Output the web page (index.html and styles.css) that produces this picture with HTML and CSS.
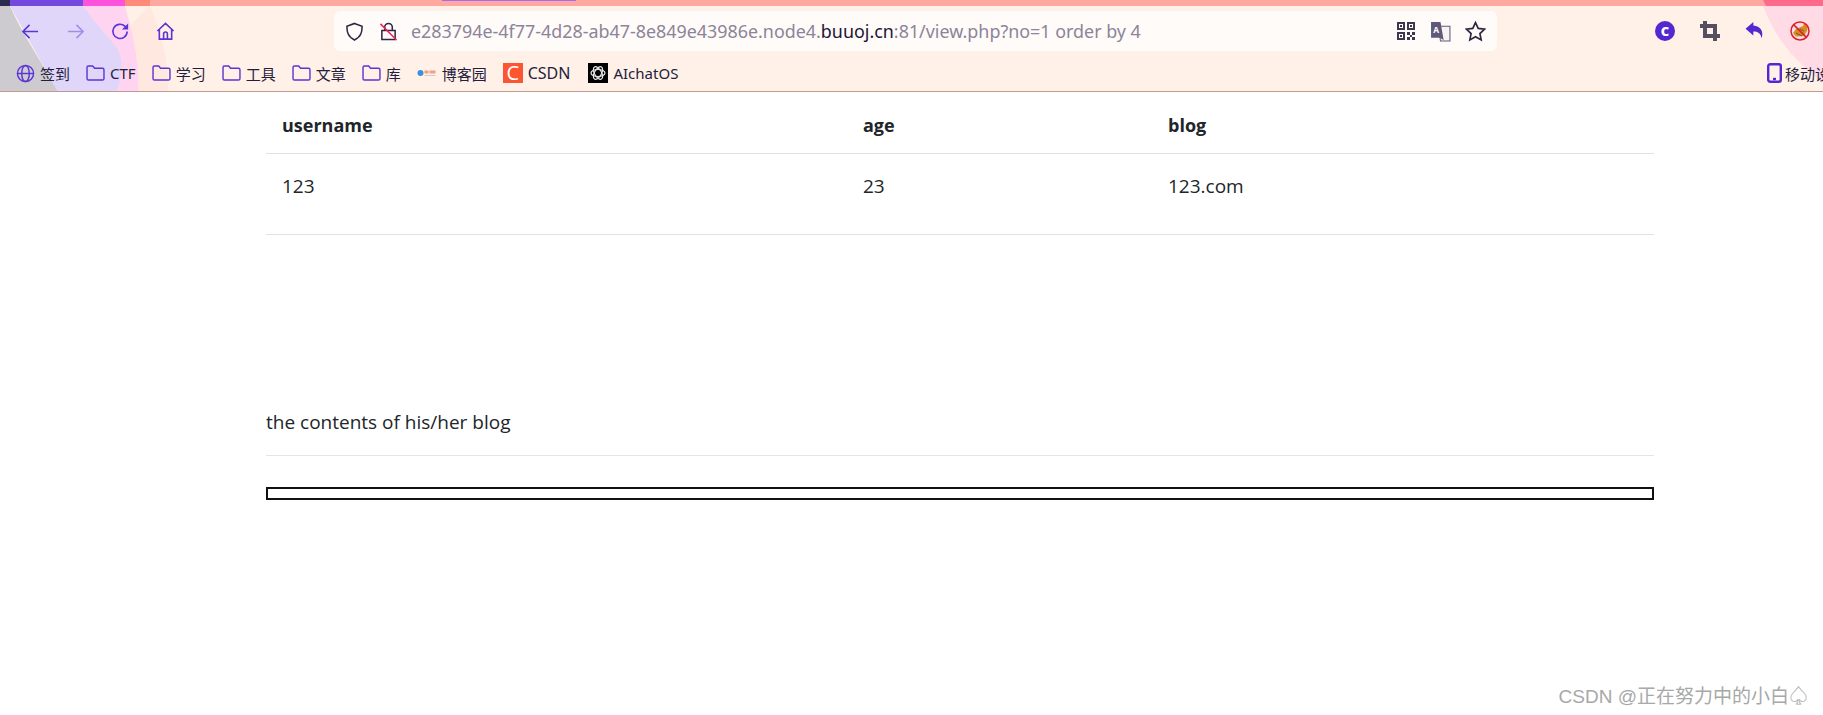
FILE: index.html
```html
<!DOCTYPE html>
<html lang="en">
<head>
<meta charset="utf-8">
<title>view.php</title>
<link rel="stylesheet" href="styles.css">
</head>
<body>
<header class="chrome">
  <svg class="chrome-bg" width="1823" height="92" viewBox="0 0 1823 92">
    <rect width="1823" height="92" fill="#fff1e7"/>
    <path d="M150 6C160 30 170 64 168 92H60Z" fill="#ffe8e0"/>
    <path d="M83 6H125C132 30 140 64 138 92H60Z" fill="#ffd4f0"/>
    <path d="M10 6H83C97 26 112 40 118 50C124 62 122 78 116 92H58Z" fill="#e0d6fa"/>
    <path d="M0 6H10C22 34 42 62 58 92H0Z" fill="#cdcbd0"/>
    <path d="M1763 6H1823V82C1795 62 1775 38 1763 6Z" fill="#ffdbe6"/>
    <rect width="1823" height="6" fill="#ffa8a0"/>
    <rect x="125" width="25" height="6" fill="#ff8a78"/>
    <rect x="83" width="42" height="6" fill="#ff52dc"/>
    <rect x="10" width="73" height="6" fill="#7348de"/>
    <rect width="10" height="6" fill="#2c2a50"/>
    <path d="M1763 0H1823V6H1766Z" fill="#ff6a8a"/>
    <rect x="442" width="134" height="1" fill="#a06cf5"/>
  </svg>

  <div class="toolbar">
    <svg class="nav-icon" viewBox="0 0 20 20"><path d="M18 10H2M9 3l-7 7 7 7"/></svg>
    <svg class="nav-icon nav-off" viewBox="0 0 20 20"><path d="M2 10h16M11 3l7 7-7 7"/></svg>
    <svg class="nav-icon" viewBox="0 0 20 20"><path d="M17 10a7.500 7.500 0 1 1-2.400-5.600L17 6.500"/><path class="solid" d="M18 1.500v6.500h-6.500z"/></svg>
    <svg class="nav-icon" viewBox="0 0 20 20"><path d="M1.500 9.500 10 1.500l8.500 8M3.500 8v10h13V8M8 18v-5.500a2 2 0 0 1 4 0V18"/></svg>

    <div class="address">
      <svg class="addr-icon" viewBox="0 0 20 20"><path d="M10 1.500 18 4.500c0 6-1 11-8 14.500C3 15.500 2 10.500 2 4.500z"/></svg>
      <svg class="addr-icon lock" viewBox="0 0 20 20"><path d="M3 9h14v9.500H3zM6 9V5.500a4 4 0 0 1 8 0V9"/><path class="slash" d="M1.500 2 18.500 19"/></svg>
      <span class="url">e283794e-4f77-4d28-ab47-8e849e43986e.node4.<b>buuoj.cn</b>:81/view.php?no=1 order by 4</span>
      <svg class="qr" viewBox="0 0 18 18"><path d="M0 0h8v8H0zM2 2v4h4V2zM10 0h8v8h-8zM12 2v4h4V2zM0 10h8v8H0zM2 12v4h4v-4zM3 3h2v2H3zM13 3h2v2h-2zM3 13h2v2H3zM10 10h3v3h-3zM15 10h3v3h-3zM13 13h2v2h-2zM10 15h3v3h-3zM15 15h3v3h-3z"/></svg>
      <svg class="translate" viewBox="0 0 20 20"><path class="tr-back" d="M8 5h11v14H10z"/><path class="tr-front" d="M1 1h9l3 17-4-2H1z"/><text x="3" y="11" class="tr-a">A</text></svg>
      <svg class="addr-icon star" viewBox="0 0 20 20"><path d="M10 1.500l2.600 5.600 6 .7-4.400 4.200 1.200 6L10 15l-5.400 3 1.200-6L1.400 7.800l6-.7z"/></svg>
    </div>

    <div class="extensions">
      <span class="ext-c">C</span>
      <svg class="ext" viewBox="0 0 18 18"><path class="crop" d="M4.500 0v13.500H18M0 4.500h13.500V18"/></svg>
      <svg class="ext" viewBox="0 0 18 18"><path class="solid-purple" d="M7.500 1 .5 7l7 6V9.500c4 0 6.500 1.500 7.500 6 2-6.500-1-11-7.500-11.500z"/></svg>
      <svg class="ext" viewBox="0 0 20 20"><path class="cat" d="M3 12l3-4 7-3 1-3 2 2 2 1-1 5-3 5-8 .5z"/><path class="cat-line" d="M6 12l6 3M10 8l4 2"/><circle class="ban" cx="10" cy="10" r="9"/><path class="ban" d="M3.600 3.600l12.800 12.800"/></svg>
    </div>
  </div>

  <nav class="bookmarks">
    <a class="bm"><svg class="bm-globe" viewBox="0 0 20 20"><circle cx="10" cy="10" r="8.500"/><ellipse cx="10" cy="10" rx="4" ry="8.500"/><path d="M1.500 10h17"/></svg>签到</a>
    <a class="bm"><svg class="folder" viewBox="0 0 20 17"><path d="M2.500 1H7l2 2.500h8.500a1.500 1.500 0 0 1 1.500 1.500v9.500a1.500 1.500 0 0 1-1.500 1.500h-15A1.500 1.500 0 0 1 1 14.500v-12A1.500 1.500 0 0 1 2.500 1z"/></svg>CTF</a>
    <a class="bm"><svg class="folder" viewBox="0 0 20 17"><path d="M2.500 1H7l2 2.500h8.500a1.500 1.500 0 0 1 1.500 1.500v9.500a1.500 1.500 0 0 1-1.500 1.500h-15A1.500 1.500 0 0 1 1 14.500v-12A1.500 1.500 0 0 1 2.500 1z"/></svg>学习</a>
    <a class="bm"><svg class="folder" viewBox="0 0 20 17"><path d="M2.500 1H7l2 2.500h8.500a1.500 1.500 0 0 1 1.500 1.500v9.500a1.500 1.500 0 0 1-1.500 1.500h-15A1.500 1.500 0 0 1 1 14.500v-12A1.500 1.500 0 0 1 2.500 1z"/></svg>工具</a>
    <a class="bm"><svg class="folder" viewBox="0 0 20 17"><path d="M2.500 1H7l2 2.500h8.500a1.500 1.500 0 0 1 1.500 1.500v9.500a1.500 1.500 0 0 1-1.500 1.500h-15A1.500 1.500 0 0 1 1 14.500v-12A1.500 1.500 0 0 1 2.500 1z"/></svg>文章</a>
    <a class="bm"><svg class="folder" viewBox="0 0 20 17"><path d="M2.500 1H7l2 2.500h8.500a1.500 1.500 0 0 1 1.500 1.500v9.500a1.500 1.500 0 0 1-1.500 1.500h-15A1.500 1.500 0 0 1 1 14.500v-12A1.500 1.500 0 0 1 2.500 1z"/></svg>库</a>
    <a class="bm"><svg class="cnb" viewBox="0 0 20 8"><circle cx="3.500" cy="4" r="3" fill="#3b8fe0"/><rect x="7.500" y="1.500" width="4" height="3" fill="#f0a070"/><rect x="12.500" y="1.500" width="6" height="3" fill="#f0a090"/><rect x="7.500" y="6" width="11" height="1" fill="#ccc"/></svg>博客园</a>
    <a class="bm bm-wide"><span class="csdn">C</span>CSDN</a>
    <a class="bm bm-ai"><svg class="aichat" viewBox="0 0 20 20"><rect width="20" height="20" fill="#000"/><g class="ai-knot"><ellipse cx="10" cy="10" rx="7" ry="3.500"/><ellipse cx="10" cy="10" rx="7" ry="3.500" transform="rotate(60 10 10)"/><ellipse cx="10" cy="10" rx="7" ry="3.500" transform="rotate(120 10 10)"/></g></svg>AIchatOS</a>
    <a class="bm-mobile"><svg class="mobile" viewBox="0 0 15 20"><rect x="1.200" y="1.200" width="12.600" height="17.600" rx="2"/><path d="M6 16h3"/></svg>移动设备上的书签</a>
  </nav>
</header>

<main class="page">
  <table class="info">
    <thead>
      <tr><th class="col-user">username</th><th class="col-age">age</th><th>blog</th></tr>
    </thead>
    <tbody>
      <tr><td>123</td><td>23</td><td>123.com</td></tr>
    </tbody>
  </table>
  <p class="contents">the contents of his/her blog</p>
  <hr class="rule">
  <div class="frame"></div>
</main>

<div class="watermark">CSDN @正在努力中的小白♤</div>
</body>
</html>
```
FILE: styles.css
```css
html, body {
  margin: 0;
  padding: 0;
  height: 715px;
  overflow: hidden;
  background: #fff;
  font-family: "Open Sans", "Noto Sans CJK SC", sans-serif;
  color: #212529;
}

.chrome {
  position: relative;
  width: 1823px;
  height: 92px;
  box-sizing: border-box;
  padding-top: 11px;
  border-bottom: 1px solid #c09a8c;
  overflow: hidden;
  font-family: "Noto Sans", "Noto Sans CJK SC", sans-serif;
}
.chrome-bg { position: absolute; left: 0; top: 0; }

.toolbar {
  position: relative;
  display: flex;
  align-items: center;
  height: 40px;
  padding-left: 21px;
}
.nav-icon {
  width: 19px;
  height: 19px;
  margin-right: 26px;
  fill: none;
  stroke: #5b35d5;
  stroke-width: 1.7;
  flex: none;
}
.nav-off { opacity: .45; }
.nav-icon .solid { fill: #5b35d5; stroke: none; }

.address {
  display: flex;
  align-items: center;
  width: 1163px;
  height: 40px;
  margin-left: 133px;
  box-sizing: border-box;
  padding-left: 11px;
  background: #fffbf8;
  border-radius: 6px;
  flex: none;
}
.addr-icon {
  width: 19px;
  height: 19px;
  flex: none;
  fill: none;
  stroke: #2b2740;
  stroke-width: 1.6;
}
.lock { margin-left: 15px; }
.slash { stroke: #f0205a; }
.url {
  width: 862px;
  margin-left: 13px;
  font-size: 17.9px;
  color: #8c8499;
  white-space: nowrap;
  flex: none;
}
.url b { font-weight: 400; color: #1c1638; }
.qr { width: 18px; height: 18px; margin-left: 124px; fill: #3c3850; fill-rule: evenodd; flex: none; }
.translate { width: 21px; height: 21px; margin-left: 15px; flex: none; }
.tr-back { fill: #f6f3f5; stroke: #5f5a78; stroke-width: 1; }
.tr-front { fill: #5f5a78; }
.tr-a { fill: #fff; font-size: 8px; font-weight: 700; font-family: "Noto Sans", sans-serif; }
.star { margin-left: 14px; width: 21px; height: 21px; }

.extensions {
  display: flex;
  align-items: center;
  gap: 25px;
  margin-left: 158px;
  flex: none;
}
.ext-c {
  width: 20px;
  height: 20px;
  border-radius: 50%;
  background: #5427d0;
  color: #fff;
  font: 800 13px/20px "Open Sans", sans-serif;
  text-align: center;
}
.ext { width: 20px; height: 20px; flex: none; }
.crop { fill: none; stroke: #54505f; stroke-width: 3.6; }
.solid-purple { fill: #5427d0; }
.cat { fill: #d98a20; }
.cat-line { fill: none; stroke: #6b5a40; stroke-width: 1; }
.ban { fill: none; stroke: #d8202a; stroke-width: 1.5; }

.bookmarks {
  position: relative;
  display: flex;
  align-items: center;
  gap: 16px;
  height: 40px;
  margin-top: 2px;
  padding-left: 16px;
  font-size: 15px;
  color: #241d40;
  white-space: nowrap;
}
.bm { display: flex; align-items: center; flex: none; }
.bm-wide { font-size: 16px; }
.bm-ai { margin-left: 2px; }
.bm-globe { width: 19px; height: 19px; margin-right: 5px; fill: none; stroke: #5b35d5; stroke-width: 1.5; }
.folder { width: 19px; height: 16px; margin-right: 5px; fill: none; stroke: #5b35d5; stroke-width: 1.5; }
.cnb { width: 20px; height: 8px; margin-right: 5px; }
.csdn {
  width: 20px;
  height: 20px;
  margin-right: 5px;
  background: #fc5531;
  color: #fff;
  font: 400 20px/20px "Open Sans", sans-serif;
  text-align: center;
  overflow: hidden;
}
.aichat { width: 20px; height: 20px; margin-right: 5px; }
.ai-knot { fill: none; stroke: #e8e8e8; stroke-width: 1.2; }
.bm-mobile { position: absolute; left: 1767px; top: 0; height: 40px; display: flex; align-items: center; }
.mobile { width: 15px; height: 20px; margin-right: 3px; fill: none; stroke: #5427d0; stroke-width: 2.4; }

.page {
  width: 1388px;
  margin-left: 266px;
  font-size: 19px;
}
.info { width: 100%; border-collapse: collapse; table-layout: fixed; }
.info th, .info td {
  padding: 0 16px;
  text-align: left;
  line-height: 27px;
}
.info th { height: 61px; padding-top: 6px; font-size: 18px; font-weight: 700; color: #212529; border-bottom: 1px solid #dee2e6; box-sizing: border-box; }
.info td { height: 81px; padding-bottom: 14px; font-size: 19px; box-sizing: border-box; border-bottom: 1px solid #dee2e6; }
.col-user { width: 581px; }
.col-age { width: 305px; }

.contents { margin: 174px 0 0; line-height: 27px; }
.rule { margin: 19px 0 0; border: 0; border-top: 1px solid #e3e5e7; }
.frame {
  height: 13px;
  margin-top: 31px;
  box-sizing: border-box;
  border: 2px solid #111;
}

.watermark {
  position: absolute;
  right: 15px;
  top: 684px;
  font-size: 19px;
  line-height: 26px;
  color: #a8a8a8;
  font-family: "Liberation Sans", "Noto Sans CJK SC", sans-serif;
  white-space: nowrap;
}
```
